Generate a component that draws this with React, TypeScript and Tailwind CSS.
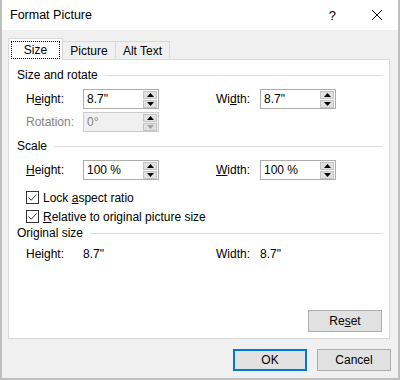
import type { ReactNode } from "react";

const font = { fontFamily: '"Liberation Sans", Arial, sans-serif' };

function Heading({ text }: { text: string }) {
    return (
        <div className="flex items-center h-[16px]">
            <span>{text}</span>
            <div className="flex-1 h-px bg-[#dcdcdc] ml-[7px]"></div>
        </div>
    );
}

function Arrow({ up, disabled }: { up: boolean; disabled?: boolean }) {
    return (
        <svg width="7" height="4" viewBox="0 0 7 4">
            <path d={up ? "M0 4 L3.5 0 L7 4Z" : "M0 0 L3.5 4 L7 0Z"} fill={disabled ? "#a0a0a0" : "#000"} />
        </svg>
    );
}

function Spin({ value, disabled }: { value: string; disabled?: boolean }) {
    return (
        <div className={`flex items-center w-[76px] h-[20px] border ${disabled ? "border-[#cccccc] bg-[#f0f0f0] text-[#838383]" : "border-[#adadad] bg-white"}`}>
            <span className="flex-1 pl-[3px]">{value}</span>
            <div className="flex flex-col gap-px mr-px">
                <div className="w-[14px] h-[8px] bg-[#e1e1e1] border border-[#c4c4c4] flex items-center justify-center">
                    <Arrow up />
                </div>
                <div className="w-[14px] h-[8px] bg-[#e1e1e1] border border-[#c4c4c4] flex items-center justify-center">
                    <Arrow up={false} disabled={disabled} />
                </div>
            </div>
        </div>
    );
}

function Check({ children }: { children: ReactNode }) {
    return (
        <div className="flex items-center h-[15px] pl-[9px]">
            <div className="w-[13px] h-[13px] border border-[#333] bg-white flex items-center justify-center">
                <svg width="11" height="11" viewBox="0 0 11 11">
                    <path d="M1.5 5.5 L4.2 8.2 L9.5 2.5" stroke="#333" strokeWidth="1" fill="none" />
                </svg>
            </div>
            <span className="ml-[4px]">{children}</span>
        </div>
    );
}

function Btn({ children, primary }: { children: ReactNode; primary?: boolean }) {
    return (
        <button className={`w-[74px] h-[22px] bg-[#e1e1e1] flex items-center justify-center ${primary ? "border-2 border-[#0078d7]" : "border border-[#adadad]"}`}>
            {children}
        </button>
    );
}

export default function App() {
    return (
        <div style={font} className="w-[400px] h-[380px] flex flex-col bg-[#f0f0f0] border-x-2 border-b-2 border-[#bfbfbf] text-[12px] text-black leading-none">
            <div className="h-[30px] bg-white flex items-center pl-[8px] shrink-0">
                <span className="text-[12.5px]">Format Picture</span>
                <span className="ml-auto text-[13px] mr-[35px]">?</span>
                <svg width="12" height="12" viewBox="0 0 12 12" className="mr-[15px]">
                    <path d="M1 1 L11 11 M11 1 L1 11" stroke="#000" strokeWidth="1" />
                </svg>
            </div>

            <div className="flex flex-col pl-[6px] pt-[8px]">
                <div className="flex items-end h-[21px]">
                    <div className="relative z-10 w-[55px] h-[22px] -mb-px bg-white border border-b-0 border-[#d9d9d9] flex items-center justify-center">
                        <span className="outline-1 outline-dotted outline-black px-[12px] py-[2px]">Size</span>
                    </div>
                    <div className="w-[53px] h-[18px] border border-b-0 border-l-0 border-[#d9d9d9] flex items-center justify-center">Picture</div>
                    <div className="w-[54px] h-[18px] border border-b-0 border-l-0 border-[#d9d9d9] flex items-center justify-center">Alt Text</div>
                </div>

                <div className="w-[382px] h-[280px] bg-white border border-[#d9d9d9] flex flex-col pl-[8px] pr-[6px] pt-[7px]">
                    <Heading text="Size and rotate" />
                    <div className="flex items-center pl-[9px] mt-[6px]">
                        <span className="w-[57px]">H<u>e</u>ight:</span>
                        <Spin value={'8.7"'} />
                        <span className="w-[44px] ml-[57px]">Wi<u>d</u>th:</span>
                        <Spin value={'8.7"'} />
                    </div>
                    <div className="flex items-center pl-[9px] mt-[3px]">
                        <span className="w-[57px] text-[#838383]">Rotation:</span>
                        <Spin value="0°" disabled />
                    </div>

                    <div className="mt-[6px]">
                        <Heading text="Scale" />
                    </div>
                    <div className="flex items-center pl-[9px] mt-[6px]">
                        <span className="w-[57px]"><u>H</u>eight:</span>
                        <Spin value="100 %" />
                        <span className="w-[44px] ml-[57px]"><u>W</u>idth:</span>
                        <Spin value="100 %" />
                    </div>
                    <div className="mt-[10px]">
                        <Check>Lock <u>a</u>spect ratio</Check>
                    </div>
                    <div className="mt-[4px]">
                        <Check><u>R</u>elative to original picture size</Check>
                    </div>

                    <div className="mt-[1px]">
                        <Heading text="Original size" />
                    </div>
                    <div className="flex items-center h-[16px] pl-[9px] mt-[5px]">
                        <span className="w-[57px]">Height:</span>
                        <span className="w-[76px]">8.7"</span>
                        <span className="w-[44px] ml-[57px]">Width:</span>
                        <span>8.7"</span>
                    </div>

                    <div className="flex-1"></div>
                    <div className="flex justify-end mb-[6px] mr-px">
                        <Btn>Re<u>s</u>et</Btn>
                    </div>
                </div>

                <div className="flex justify-end gap-[10px] mt-[10px] pr-[7px]">
                    <Btn primary>OK</Btn>
                    <Btn>Cancel</Btn>
                </div>
            </div>
        </div>
    );
}
